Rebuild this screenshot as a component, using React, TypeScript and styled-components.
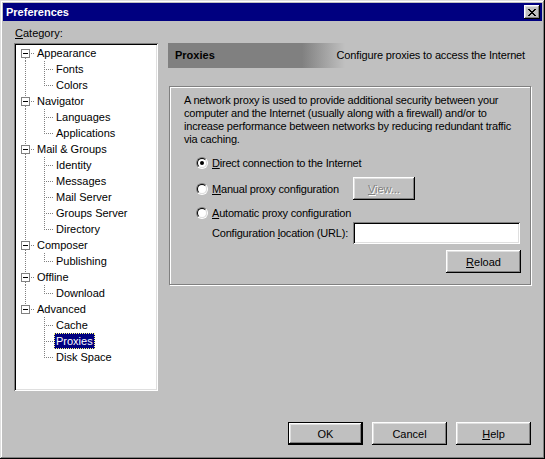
import React from "react";
import styled, { createGlobalStyle, css } from "styled-components";

const GlobalStyle = createGlobalStyle`
  html, body {
    margin: 0;
    padding: 0;
    background: #c0c0c0;
  }
  body {
    font-family: "Liberation Sans", Arial, sans-serif;
    font-size: 11px;
    color: #000;
  }
`;

const face = "#c0c0c0";
const shadow = "#808080";
const light = "#dfdfdf";

const raised = css`
  box-shadow: inset -1px -1px #000, inset 1px 1px #fff, inset -2px -2px ${shadow},
    inset 2px 2px ${light};
`;

const sunken = css`
  box-shadow: inset 1px 1px ${shadow}, inset -1px -1px #fff, inset 2px 2px #000,
    inset -2px -2px ${light};
`;

const Window = styled.div`
  width: 545px;
  height: 459px;
  box-sizing: border-box;
  padding: 3px;
  background: ${face};
  display: flex;
  flex-direction: column;
  box-shadow: inset -1px -1px #000, inset 1px 1px ${light}, inset -2px -2px ${shadow},
    inset 2px 2px #fff;
`;

const TitleBar = styled.div`
  height: 18px;
  background: #000080;
  display: flex;
  align-items: center;
  justify-content: space-between;
  padding: 0 2px 0 3px;
  color: #fff;
  font-weight: bold;
  font-size: 11px;
`;

const TitleText = styled.span`
  line-height: 13px;
`;

const CloseButton = styled.button`
  width: 16px;
  height: 14px;
  padding: 0;
  border: none;
  background: ${face};
  display: flex;
  align-items: center;
  justify-content: center;
  ${raised};
`;

const Body = styled.div`
  flex: 1;
  display: flex;
  flex-direction: column;
  padding: 6px 10px 0 11px;
`;

const Main = styled.div`
  display: grid;
  grid-template-columns: 144px 1fr;
  grid-template-rows: 13px 348px;
  column-gap: 10px;
  row-gap: 3px;
`;

const CategoryLabel = styled.div`
  grid-column: 1;
  grid-row: 1;
  line-height: 13px;
  padding-left: 1px;
`;

const TreeBox = styled.div`
  grid-column: 1;
  grid-row: 2;
  background: #fff;
  padding: 2px;
  ${sunken};
`;

const TreeRow = styled.div`
  display: flex;
  align-items: center;
  height: 16px;
  line-height: 16px;
  white-space: nowrap;
`;

const TreeLabel = styled.span<{ $selected?: boolean }>`
  padding: 0 2px;
  height: 16px;
  box-sizing: border-box;
  ${(p) =>
    p.$selected &&
    css`
      background: #000080;
      color: #fff;
      outline: 1px dotted #ffff80;
      outline-offset: -1px;
    `}
`;

const RightPanel = styled.div`
  grid-column: 2;
  grid-row: 2;
  display: flex;
  flex-direction: column;
`;

const PanelHeader = styled.div`
  height: 24px;
  display: flex;
  align-items: center;
  justify-content: space-between;
  padding: 0 7px 1px 7px;
  white-space: nowrap;
  background: linear-gradient(
    90deg,
    #808080 0px,
    #808080 134px,
    #a4a4a4 158px,
    #c0c0c0 177px,
    #c0c0c0 100%
  );
`;

const HeaderTitle = styled.span`
  font-weight: bold;
`;

const HeaderCaption = styled.span`
  letter-spacing: -0.15px;
`;

const GroupBox = styled.div`
  margin: 18px 1px 0 1px;
  border: 1px solid ${shadow};
  box-shadow: 1px 1px 0 #fff, inset 1px 1px 0 #fff;
  padding: 7px 9px 11px 14px;
  letter-spacing: -0.2px;
`;

const Description = styled.p`
  margin: 0;
  line-height: 13px;
  white-space: nowrap;
`;

const OptionList = styled.div`
  margin: 9px 0 0 12px;
  display: flex;
  flex-direction: column;
`;

const OptionRow = styled.div<{ $height: number; $gap: number }>`
  display: flex;
  align-items: center;
  height: ${(p) => p.$height}px;
  margin-top: ${(p) => p.$gap}px;
  white-space: nowrap;
`;

const OptionLead = styled.div<{ $indent?: boolean }>`
  width: 157px;
  flex-shrink: 0;
  display: flex;
  align-items: center;
  gap: 4px;
  padding-left: ${(p) => (p.$indent ? 16 : 0)}px;
  box-sizing: border-box;
`;

const OptionControl = styled.div`
  width: 168px;
  display: flex;
  align-items: center;
`;

const RadioOuter = styled.span`
  width: 12px;
  height: 12px;
  border-radius: 50%;
  box-sizing: border-box;
  border: 1px solid;
  border-color: ${shadow} #fff #fff ${shadow};
  display: inline-flex;
  flex-shrink: 0;
`;

const RadioInner = styled.span`
  flex: 1;
  border-radius: 50%;
  border: 1px solid;
  border-color: #000 ${light} ${light} #000;
  background: #fff;
  display: flex;
  align-items: center;
  justify-content: center;
`;

const RadioDot = styled.span`
  width: 4px;
  height: 4px;
  border-radius: 50%;
  background: #000;
`;

const Button = styled.button<{ $width: number; $default?: boolean; $end?: boolean }>`
  width: ${(p) => p.$width}px;
  height: 23px;
  padding: 0;
  border: none;
  background: ${face};
  font-family: "Liberation Sans", Arial, sans-serif;
  font-size: 11px;
  letter-spacing: 0;
  color: #000;
  margin-left: ${(p) => (p.$end ? "auto" : "0")};
  ${raised};
  ${(p) =>
    p.$default &&
    css`
      box-shadow: inset 0 0 0 1px #000, inset -2px -2px #000, inset 2px 2px #fff,
        inset -3px -3px ${shadow}, inset 3px 3px ${light};
    `}
  &:disabled {
    color: ${shadow};
    text-shadow: 1px 1px 0 #fff;
  }
`;

const TextInput = styled.input`
  width: 167px;
  height: 22px;
  box-sizing: border-box;
  border: none;
  background: #fff;
  padding: 2px 3px;
  font-family: "Liberation Sans", Arial, sans-serif;
  font-size: 11px;
  ${sunken};
`;

const Footer = styled.div`
  margin-top: auto;
  display: flex;
  justify-content: flex-end;
  gap: 9px;
  padding: 0 1px 11px 0;
`;

const Key = styled.span`
  text-decoration: underline;
`;

const CloseGlyph = () => (
  <svg width="8" height="7" viewBox="0 0 8 7" shapeRendering="crispEdges">
    <path
      d="M0 0h2v1H0zM6 0h2v1H6zM1 1h2v1H1zM5 1h2v1H5zM2 2h4v1H2zM3 3h2v1H3zM2 4h4v1H2zM1 5h2v1H1zM5 5h2v1H5zM0 6h2v1H0zM6 6h2v1H6z"
      fill="#000"
    />
  </svg>
);

const dots = { stroke: "#808080", strokeDasharray: "1 1", strokeWidth: 1 };

const ParentLines = ({ first, last }: { first: boolean; last: boolean }) => (
  <svg width="19" height="16" shapeRendering="crispEdges">
    {!first && <line x1="9.5" y1="0" x2="9.5" y2="4" {...dots} />}
    {!last && <line x1="9.5" y1="13" x2="9.5" y2="16" {...dots} />}
    <line x1="15" y1="8.5" x2="19" y2="8.5" {...dots} />
    <rect x="5.5" y="4.5" width="8" height="8" fill="#fff" stroke="#808080" />
    <line x1="7" y1="8.5" x2="12" y2="8.5" stroke="#000" />
  </svg>
);

const ChildLines = ({ trunk, lastChild }: { trunk: boolean; lastChild: boolean }) => (
  <svg width="38" height="16" shapeRendering="crispEdges">
    {trunk && <line x1="9.5" y1="0" x2="9.5" y2="16" {...dots} />}
    <line x1="28.5" y1="0" x2="28.5" y2={lastChild ? 9 : 16} {...dots} />
    <line x1="30" y1="8.5" x2="38" y2="8.5" {...dots} />
  </svg>
);

const categories: { name: string; children: string[] }[] = [
  { name: "Appearance", children: ["Fonts", "Colors"] },
  { name: "Navigator", children: ["Languages", "Applications"] },
  {
    name: "Mail & Groups",
    children: ["Identity", "Messages", "Mail Server", "Groups Server", "Directory"],
  },
  { name: "Composer", children: ["Publishing"] },
  { name: "Offline", children: ["Download"] },
  { name: "Advanced", children: ["Cache", "Proxies", "Disk Space"] },
];

const selected = "Proxies";

const CategoryTree = () => (
  <TreeBox>
    {categories.map((cat, i) => {
      const last = i === categories.length - 1;
      return (
        <React.Fragment key={cat.name}>
          <TreeRow>
            <ParentLines first={i === 0} last={last} />
            <TreeLabel>{cat.name}</TreeLabel>
          </TreeRow>
          {cat.children.map((child, j) => (
            <TreeRow key={child}>
              <ChildLines trunk={!last} lastChild={j === cat.children.length - 1} />
              <TreeLabel $selected={child === selected}>{child}</TreeLabel>
            </TreeRow>
          ))}
        </React.Fragment>
      );
    })}
  </TreeBox>
);

const Radio = ({ checked }: { checked?: boolean }) => (
  <RadioOuter>
    <RadioInner>{checked && <RadioDot />}</RadioInner>
  </RadioOuter>
);

export default function App() {
  return (
    <>
      <GlobalStyle />
      <Window>
        <TitleBar>
          <TitleText>Preferences</TitleText>
          <CloseButton>
            <CloseGlyph />
          </CloseButton>
        </TitleBar>
        <Body>
          <Main>
            <CategoryLabel>
              <Key>C</Key>ategory:
            </CategoryLabel>
            <CategoryTree />
            <RightPanel>
              <PanelHeader>
                <HeaderTitle>Proxies</HeaderTitle>
                <HeaderCaption>Configure proxies to access the Internet</HeaderCaption>
              </PanelHeader>
              <GroupBox>
                <Description>
                  A network proxy is used to provide additional security between your
                  <br />
                  computer and the Internet (usually along with a firewall) and/or to
                  <br />
                  increase performance between networks by reducing redundant traffic
                  <br />
                  via caching.
                </Description>
                <OptionList>
                  <OptionRow $height={16} $gap={0}>
                    <OptionLead>
                      <Radio checked />
                      <span>
                        <Key>D</Key>irect connection to the Internet
                      </span>
                    </OptionLead>
                  </OptionRow>
                  <OptionRow $height={23} $gap={6}>
                    <OptionLead>
                      <Radio />
                      <span>
                        <Key>M</Key>anual proxy configuration
                      </span>
                    </OptionLead>
                    <OptionControl>
                      <Button $width={62} disabled>
                        <Key>V</Key>iew...
                      </Button>
                    </OptionControl>
                  </OptionRow>
                  <OptionRow $height={16} $gap={5}>
                    <OptionLead>
                      <Radio />
                      <span>
                        <Key>A</Key>utomatic proxy configuration
                      </span>
                    </OptionLead>
                  </OptionRow>
                  <OptionRow $height={22} $gap={1}>
                    <OptionLead $indent>
                      <span>
                        Configuration <Key>l</Key>ocation (URL):
                      </span>
                    </OptionLead>
                    <OptionControl>
                      <TextInput />
                    </OptionControl>
                  </OptionRow>
                  <OptionRow $height={23} $gap={6}>
                    <OptionLead />
                    <OptionControl>
                      <Button $width={75} $end>
                        <Key>R</Key>eload
                      </Button>
                    </OptionControl>
                  </OptionRow>
                </OptionList>
              </GroupBox>
            </RightPanel>
          </Main>
          <Footer>
            <Button $width={75} $default>
              OK
            </Button>
            <Button $width={75}>Cancel</Button>
            <Button $width={75}>
              <Key>H</Key>elp
            </Button>
          </Footer>
        </Body>
      </Window>
    </>
  );
}
